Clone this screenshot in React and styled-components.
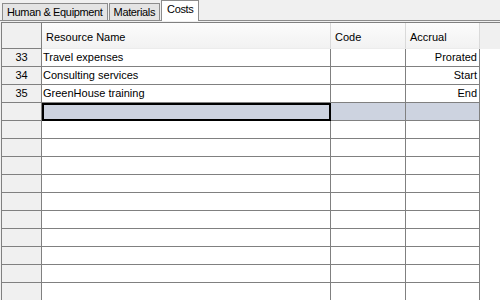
import React from "react";
import styled, { createGlobalStyle, css } from "styled-components";

const Global = createGlobalStyle`
  html, body { margin: 0; padding: 0; background: #f0f0f0; }
  body { font-family: "Liberation Sans", Arial, sans-serif; font-size: 11px; color: #000; }
  * { box-sizing: border-box; }
`;

const Page = styled.div`
  width: 500px;
  height: 300px;
  overflow: hidden;
  background: #f0f0f0;
`;

const TabStrip = styled.div`
  display: flex;
  align-items: flex-end;
  height: 21px;
  padding-left: 2px;
  border-bottom: 1px solid #8c8c8c;
`;

const Tab = styled.div`
  height: 17px;
  padding: 0 4px;
  line-height: 16px;
  letter-spacing: -0.35px;
  white-space: nowrap;
  background: #e4e4e4;
  border: 1px solid #8c8c8c;
  border-bottom: none;
  & + & { margin-left: 1px; }
  ${(p) =>
    p.$active &&
    css`
      height: 21px;
      margin-bottom: -1px;
      padding: 0 5px;
      line-height: 17px;
      background: #ffffff;
    `}
`;

const Grid = styled.div`
  margin: 1px 0 0 1px;
  border-left: 1px solid #808080;
  border-top: 1px solid #808080;
  background: #ffffff;
  display: grid;
  grid-template-columns: 40px 289px 75px 74px 1fr;
  grid-auto-rows: 18px;
  grid-template-rows: 26px;
`;

const Corner = styled.div`
  background: #f0f0f0;
  border-right: 1px solid #808080;
  border-bottom: 1px solid #808080;
`;

const HeadCell = styled.div`
  background: linear-gradient(#fcfcfc, #f2f2f2);
  border-right: 1px solid #dadada;
  border-bottom: 1px solid #ececec;
  padding: 8px 0 0 4px;
  white-space: nowrap;
`;

const HeadFill = styled.div`
  background: #f0f0f0;
`;

const RowHead = styled.div`
  background: #f0f0f0;
  border-right: 1px solid #808080;
  border-bottom: 1px solid #808080;
  text-align: center;
  line-height: 17px;
`;

const Cell = styled.div`
  border-right: 1px solid #808080;
  border-bottom: 1px solid #808080;
  line-height: 17px;
  padding: 0 2px 0 1px;
  white-space: nowrap;
  overflow: hidden;
  text-align: ${(p) => (p.$right ? "right" : "left")};
  background: ${(p) => (p.$sel ? "#cdd3e0" : "#ffffff")};
  ${(p) =>
    p.$focus &&
    css`
      border-right-color: #000;
      border-bottom-color: #000;
      box-shadow: inset 2px 2px 0 0 #000, inset -1px -1px 0 0 #000;
    `}
`;

const Fill = styled.div`
  background: #ffffff;
`;

const rows = [
  { n: "33", name: "Travel expenses", code: "", accrual: "Prorated" },
  { n: "34", name: "Consulting services", code: "", accrual: "Start" },
  { n: "35", name: "GreenHouse training", code: "", accrual: "End" },
  { n: "", name: "", code: "", accrual: "", sel: true },
];
while (rows.length < 14) rows.push({ n: "", name: "", code: "", accrual: "" });

export default function App() {
  return (
    <Page>
      <Global />
      <TabStrip>
        <Tab>Human &amp; Equipment</Tab>
        <Tab>Materials</Tab>
        <Tab $active>Costs</Tab>
      </TabStrip>
      <Grid>
        <Corner />
        <HeadCell>Resource Name</HeadCell>
        <HeadCell>Code</HeadCell>
        <HeadCell>Accrual</HeadCell>
        <HeadFill />
        {rows.map((r, i) => (
          <React.Fragment key={i}>
            <RowHead>{r.n}</RowHead>
            <Cell $sel={r.sel} $focus={r.sel}>{r.name}</Cell>
            <Cell $sel={r.sel}>{r.code}</Cell>
            <Cell $sel={r.sel} $right>{r.accrual}</Cell>
            <Fill />
          </React.Fragment>
        ))}
      </Grid>
    </Page>
  );
}
